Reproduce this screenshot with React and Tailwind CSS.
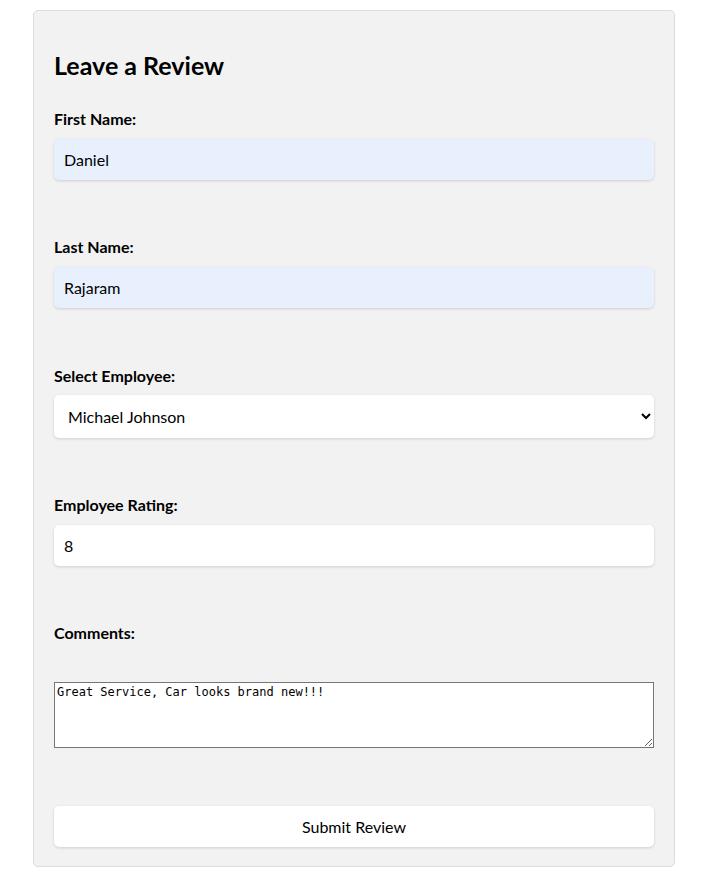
import { useState } from 'react';

const employees = ['Michael Johnson', 'Sarah Williams', 'David Brown'];

function Field({ label, className = '', children }) {
  return (
    <div className={className}>
      <label className="block text-[16px] leading-[20px] font-bold text-black">{label}</label>
      {children}
    </div>
  );
}

export default function App() {
  const [firstName, setFirstName] = useState('Daniel');
  const [lastName, setLastName] = useState('Rajaram');
  const [employee, setEmployee] = useState('Michael Johnson');
  const [rating, setRating] = useState('8');
  const [comments, setComments] = useState('Great Service, Car looks brand new!!!');

  const inputCls =
    'mt-[10px] block w-full h-[41px] rounded-[5px] px-[10px] text-[16px] text-black shadow-[0_1px_3px_rgba(0,0,0,0.15)] outline-none';

  return (
    <div className="min-h-screen bg-white pt-[10px] font-['Lato','Liberation_Sans',sans-serif]">
      <form
        className="ml-[33px] w-[642px] rounded-[5px] border border-[#dcdcdc] bg-[#f2f2f2] px-5 pt-5 pb-[19px]"
        onSubmit={(e) => e.preventDefault()}
      >
        <h2 className="mt-[18px] text-[25px] leading-[32px] font-bold text-black">Leave a Review</h2>

        <Field label="First Name:" className="mt-[28px]">
          <input
            className={inputCls + ' bg-[#e8f0fe]'}
            value={firstName}
            onChange={(e) => setFirstName(e.target.value)}
          />
        </Field>

        <Field label="Last Name:" className="mt-[57px]">
          <input
            className={inputCls + ' bg-[#e8f0fe]'}
            value={lastName}
            onChange={(e) => setLastName(e.target.value)}
          />
        </Field>

        <Field label="Select Employee:" className="mt-[58px]">
          <select
            className="mt-[9px] block w-full h-[43px] rounded-[5px] bg-white pl-[10px] pr-[8px] text-[16px] text-black shadow-[0_1px_3px_rgba(0,0,0,0.15)] outline-none"
            value={employee}
            onChange={(e) => setEmployee(e.target.value)}
          >
            {employees.map((name) => (
              <option key={name}>{name}</option>
            ))}
          </select>
        </Field>

        <Field label="Employee Rating:" className="mt-[57px]">
          <input
            type="number"
            className={inputCls + ' bg-white'}
            value={rating}
            onChange={(e) => setRating(e.target.value)}
          />
        </Field>

        <Field label="Comments:" className="mt-[57px]">
          <textarea
            className="mt-[39px] block w-full h-[66px] border border-[#767676] bg-white p-[2px] font-['DejaVu_Sans_Mono','Liberation_Mono',monospace] text-[12px] leading-[15px] text-black outline-none"
            value={comments}
            onChange={(e) => setComments(e.target.value)}
          />
        </Field>

        <button
          type="submit"
          className="mt-[58px] block w-full h-[41px] rounded-[5px] bg-white text-[16px] text-black shadow-[0_1px_3px_rgba(0,0,0,0.15)]"
        >
          Submit Review
        </button>
      </form>
    </div>
  );
}
